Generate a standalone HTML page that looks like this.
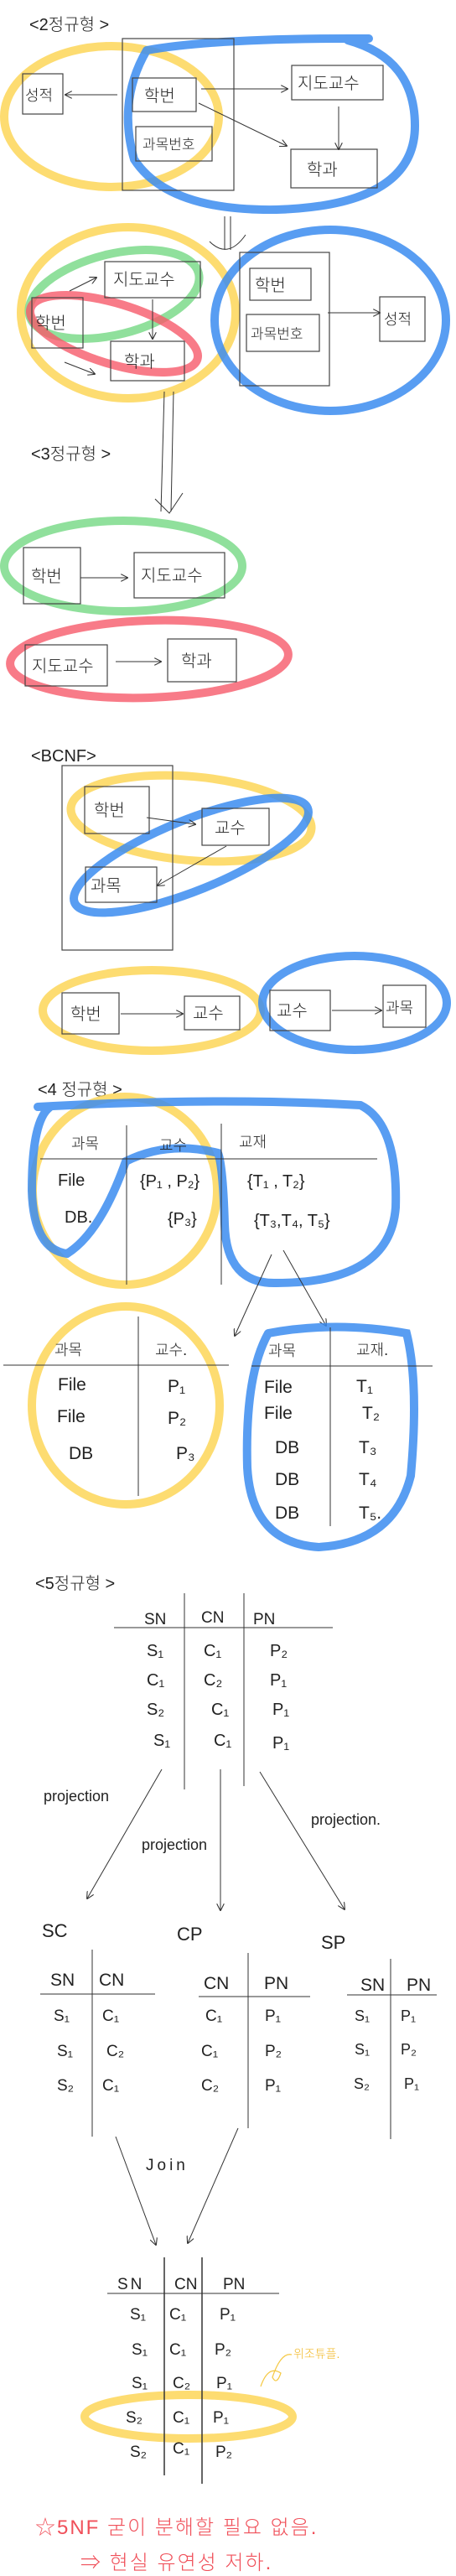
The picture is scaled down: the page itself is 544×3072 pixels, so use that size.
<!DOCTYPE html>
<html><head><meta charset="utf-8"><style>
html,body{margin:0;padding:0;background:#fff;}
svg{display:block}
text{font-family:"Liberation Sans","Noto Sans CJK KR","NanumGothic",sans-serif;fill:#222;font-weight:300}
.b{fill:none;stroke:#444;stroke-width:1.2}
.l{fill:none;stroke:#333;stroke-width:1}
.y{fill:none;stroke:#fcd34d;stroke-width:10;opacity:.8;stroke-linecap:round}
.bl{fill:none;stroke:#3b8cf0;stroke-width:10;opacity:.85;stroke-linecap:round}
.g{fill:none;stroke:#74d883;stroke-width:10;opacity:.8;stroke-linecap:round}
.r{fill:none;stroke:#f65a6a;stroke-width:10;opacity:.8;stroke-linecap:round}
</style></head><body>
<svg width="544" height="3072" viewBox="0 0 544 3072" xmlns="http://www.w3.org/2000/svg">
<defs><marker id="a" viewBox="0 0 10 10" refX="9" refY="5" markerWidth="9" markerHeight="9" orient="auto"><path d="M0 0L10 5L0 10" fill="none" stroke="#333" stroke-width="1.2"/></marker></defs>

<!-- 2NF -->
<text x="35" y="36" font-size="20">&lt;2정규형 &gt;</text>
<ellipse class="y" cx="133" cy="139" rx="128" ry="84"/>
<path class="bl" d="M175 60 Q260 45 440 46 M415 48 Q495 70 495 150 Q495 245 330 250 Q200 252 160 190 Q140 120 175 60"/>
<rect class="b" x="146" y="46" width="133" height="181"/>
<rect class="b" x="158" y="93" width="76" height="40"/><text x="172" y="121" font-size="20">학번</text>
<rect class="b" x="162" y="151" width="91" height="41"/><text x="170" y="178" font-size="17">과목번호</text>
<rect class="b" x="27" y="88" width="48" height="48"/><text x="30" y="120" font-size="18">성적</text>
<line class="l" x1="140" y1="113" x2="78" y2="113" marker-end="url(#a)"/>
<rect class="b" x="348" y="78" width="109" height="41"/><text x="355" y="106" font-size="20">지도교수</text>
<rect class="b" x="347" y="178" width="103" height="46"/><text x="366" y="209" font-size="20">학과</text>
<line class="l" x1="240" y1="106" x2="343" y2="106" marker-end="url(#a)"/>
<line class="l" x1="237" y1="123" x2="342" y2="174" marker-end="url(#a)"/>
<line class="l" x1="404" y1="127" x2="404" y2="178" marker-end="url(#a)"/>
<path class="l" d="M268 258V298 M275 258V298 M250 288Q272 310 293 280"/>

<ellipse class="y" cx="153" cy="373" rx="128" ry="102"/>
<ellipse class="g" cx="136" cy="351" rx="104" ry="48" transform="rotate(-14 136 351)"/>
<ellipse class="r" cx="136" cy="398" rx="104" ry="36" transform="rotate(17 136 398)"/>
<rect class="b" x="125" y="312" width="114" height="43"/><text x="135" y="340" font-size="20">지도교수</text>
<rect class="b" x="38" y="355" width="61" height="60"/><text x="42" y="392" font-size="20">학번</text>
<rect class="b" x="132" y="407" width="88" height="47"/><text x="148" y="438" font-size="20">학과</text>
<line class="l" x1="83" y1="347" x2="115" y2="331" marker-end="url(#a)"/>
<line class="l" x1="182" y1="357" x2="182" y2="404" marker-end="url(#a)"/>
<line class="l" x1="77" y1="432" x2="113" y2="446" marker-end="url(#a)"/>
<ellipse class="bl" cx="394" cy="382" rx="138" ry="108"/>
<rect class="b" x="286" y="301" width="107" height="159"/>
<rect class="b" x="298" y="320" width="73" height="38"/><text x="304" y="347" font-size="20">학번</text>
<rect class="b" x="294" y="375" width="87" height="44"/><text x="299" y="404" font-size="17">과목번호</text>
<rect class="b" x="453" y="354" width="54" height="53"/><text x="458" y="387" font-size="18">성적</text>
<line class="l" x1="391" y1="373" x2="453" y2="373" marker-end="url(#a)"/>

<text x="37" y="548" font-size="20">&lt;3정규형 &gt;</text>
<path class="l" d="M196 467L192 610 M207 467L204 610 M185 595L202 612L218 588"/>

<ellipse class="g" cx="147" cy="675" rx="142" ry="54"/>
<rect class="b" x="28" y="653" width="68" height="67"/><text x="37" y="694" font-size="20">학번</text>
<rect class="b" x="160" y="659" width="108" height="54"/><text x="168" y="693" font-size="20">지도교수</text>
<line class="l" x1="96" y1="689" x2="152" y2="689" marker-end="url(#a)"/>
<ellipse class="r" cx="178" cy="786" rx="166" ry="46" transform="rotate(-2 178 786)"/>
<rect class="b" x="30" y="769" width="98" height="49"/><text x="38" y="801" font-size="20">지도교수</text>
<rect class="b" x="200" y="762" width="82" height="51"/><text x="216" y="795" font-size="20">학과</text>
<line class="l" x1="138" y1="789" x2="192" y2="789" marker-end="url(#a)"/>

<!-- BCNF -->
<text x="37" y="908" font-size="20">&lt;BCNF&gt;</text>
<ellipse class="y" cx="228" cy="976" rx="144" ry="50" transform="rotate(5 228 976)"/>
<ellipse class="bl" cx="228" cy="1020" rx="150" ry="42" transform="rotate(-22 228 1020)"/>
<rect class="b" x="74" y="913" width="132" height="220"/>
<rect class="b" x="101" y="938" width="77" height="56"/><text x="112" y="973" font-size="20">학번</text>
<rect class="b" x="241" y="964" width="80" height="44"/><text x="256" y="994" font-size="20">교수</text>
<rect class="b" x="102" y="1034" width="85" height="42"/><text x="108" y="1063" font-size="20">과목</text>
<line class="l" x1="175" y1="975" x2="233" y2="983" marker-end="url(#a)"/>
<line class="l" x1="270" y1="1009" x2="188" y2="1056" marker-end="url(#a)"/>

<ellipse class="y" cx="181" cy="1205" rx="130" ry="48"/>
<rect class="b" x="74" y="1184" width="68" height="49"/><text x="84" y="1216" font-size="20">학번</text>
<rect class="b" x="220" y="1188" width="66" height="40"/><text x="230" y="1215" font-size="20">교수</text>
<line class="l" x1="144" y1="1209" x2="218" y2="1209" marker-end="url(#a)"/>
<ellipse class="bl" cx="423" cy="1196" rx="110" ry="56"/>
<rect class="b" x="322" y="1181" width="72" height="48"/><text x="330" y="1212" font-size="20">교수</text>
<rect class="b" x="457" y="1175" width="51" height="50"/><text x="460" y="1208" font-size="18">과목</text>
<line class="l" x1="396" y1="1205" x2="455" y2="1205" marker-end="url(#a)"/>

<!-- 4NF -->
<text x="45" y="1306" font-size="20">&lt;4 정규형 &gt;</text>
<ellipse class="y" cx="149" cy="1420" rx="110" ry="112"/>
<path class="bl" d="M45 1320 Q260 1308 430 1318 Q475 1340 472 1440 Q465 1530 330 1530 Q270 1532 268 1460 Q266 1390 260 1375 Q200 1360 150 1385 Q120 1470 80 1495 Q40 1490 38 1420 Q38 1335 60 1320"/>
<line class="l" x1="48" y1="1382" x2="450" y2="1382"/>
<line class="l" x1="151" y1="1342" x2="151" y2="1532"/>
<line class="l" x1="264" y1="1340" x2="264" y2="1532"/>
<text x="85" y="1370" font-size="18">과목</text><text x="190" y="1372" font-size="18">교수</text><text x="285" y="1368" font-size="18">교재</text>
<text x="69" y="1414" font-size="20">File</text><text x="77" y="1458" font-size="20">DB.</text>
<text x="167" y="1415" font-size="20">{P₁ , P₂}</text><text x="200" y="1460" font-size="20">{P₃}</text>
<text x="295" y="1415" font-size="20">{T₁ , T₂}</text><text x="303" y="1462" font-size="20">{T₃,T₄, T₅}</text>
<line class="l" x1="324" y1="1496" x2="280" y2="1593" marker-end="url(#a)"/>
<line class="l" x1="338" y1="1491" x2="389" y2="1581" marker-end="url(#a)"/>

<ellipse class="y" cx="150" cy="1676" rx="112" ry="118"/>
<line class="l" x1="4" y1="1628" x2="273" y2="1628"/>
<line class="l" x1="165" y1="1570" x2="165" y2="1784"/>
<text x="65" y="1616" font-size="18">과목</text><text x="185" y="1616" font-size="18">교수.</text>
<text x="69" y="1658" font-size="21">File</text><text x="68" y="1696" font-size="21">File</text><text x="82" y="1740" font-size="21">DB</text>
<text x="200" y="1660" font-size="21">P₁</text><text x="200" y="1698" font-size="21">P₂</text><text x="210" y="1740" font-size="21">P₃</text>
<path class="bl" d="M320 1590 Q400 1575 485 1590 Q500 1650 490 1760 Q470 1840 380 1845 Q300 1840 295 1750 Q292 1640 320 1590"/>
<line class="l" x1="300" y1="1629" x2="516" y2="1629"/>
<line class="l" x1="394" y1="1583" x2="394" y2="1820"/>
<text x="320" y="1617" font-size="18">과목</text><text x="425" y="1616" font-size="18">교재.</text>
<text x="315" y="1661" font-size="21">File</text><text x="315" y="1692" font-size="21">File</text>
<text x="328" y="1733" font-size="21">DB</text><text x="328" y="1771" font-size="21">DB</text><text x="328" y="1811" font-size="21">DB</text>
<text x="425" y="1660" font-size="21">T₁</text><text x="432" y="1692" font-size="21">T₂</text><text x="428" y="1733" font-size="21">T₃</text><text x="428" y="1771" font-size="21">T₄</text><text x="428" y="1811" font-size="21">T₅.</text>

<!-- 5NF -->
<text x="42" y="1895" font-size="20">&lt;5정규형 &gt;</text>
<line class="l" x1="136" y1="1941" x2="397" y2="1941"/>
<line class="l" x1="220" y1="1900" x2="220" y2="2134"/>
<line class="l" x1="291" y1="1900" x2="291" y2="2130"/>
<text x="172" y="1937" font-size="19">SN</text><text x="240" y="1935" font-size="19">CN</text><text x="302" y="1937" font-size="19">PN</text>
<g font-size="20">
<text x="175" y="1975">S₁</text><text x="243" y="1975">C₁</text><text x="322" y="1975">P₂</text>
<text x="175" y="2010">C₁</text><text x="243" y="2010">C₂</text><text x="322" y="2010">P₁</text>
<text x="175" y="2045">S₂</text><text x="252" y="2045">C₁</text><text x="325" y="2045">P₁</text>
<text x="183" y="2082">S₁</text><text x="255" y="2082">C₁</text><text x="325" y="2085">P₁</text>
</g>
<text x="52" y="2148" font-size="18">projection</text>
<text x="169" y="2206" font-size="18">projection</text>
<text x="371" y="2176" font-size="18">projection.</text>
<line class="l" x1="193" y1="2110" x2="104" y2="2264" marker-end="url(#a)"/>
<line class="l" x1="263" y1="2110" x2="263" y2="2278" marker-end="url(#a)"/>
<line class="l" x1="310" y1="2113" x2="411" y2="2277" marker-end="url(#a)"/>
<text x="50" y="2310" font-size="22">SC</text><text x="211" y="2314" font-size="22">CP</text><text x="383" y="2324" font-size="22">SP</text>

<line class="l" x1="48" y1="2378" x2="185" y2="2378"/><line class="l" x1="110" y1="2325" x2="110" y2="2548"/>
<text x="60" y="2368" font-size="21">SN</text><text x="118" y="2368" font-size="21">CN</text>
<g font-size="19"><text x="64" y="2410">S₁</text><text x="68" y="2452">S₁</text><text x="68" y="2493">S₂</text>
<text x="122" y="2410">C₁</text><text x="127" y="2452">C₂</text><text x="122" y="2493">C₁</text></g>

<line class="l" x1="237" y1="2381" x2="370" y2="2381"/><line class="l" x1="296" y1="2329" x2="296" y2="2538"/>
<text x="243" y="2372" font-size="21">CN</text><text x="315" y="2372" font-size="21">PN</text>
<g font-size="19"><text x="245" y="2410">C₁</text><text x="240" y="2452">C₁</text><text x="240" y="2493">C₂</text>
<text x="316" y="2410">P₁</text><text x="316" y="2452">P₂</text><text x="316" y="2493">P₁</text></g>

<line class="l" x1="414" y1="2379" x2="521" y2="2379"/><line class="l" x1="466" y1="2336" x2="466" y2="2551"/>
<text x="430" y="2374" font-size="21">SN</text><text x="485" y="2374" font-size="21">PN</text>
<g font-size="18"><text x="423" y="2410">S₁</text><text x="423" y="2450">S₁</text><text x="422" y="2491">S₂</text>
<text x="478" y="2410">P₁</text><text x="478" y="2450">P₂</text><text x="482" y="2491">P₁</text></g>

<line class="l" x1="138" y1="2548" x2="186" y2="2677" marker-end="url(#a)"/>
<line class="l" x1="284" y1="2538" x2="224" y2="2675" marker-end="url(#a)"/>
<text x="174" y="2588" font-size="19" letter-spacing="4">Join</text>

<ellipse class="y" cx="225" cy="2882" rx="124" ry="26"/>
<line class="l" x1="128" y1="2735" x2="333" y2="2735"/>
<line class="l" x1="196" y1="2692" x2="196" y2="2952" style="stroke-width:1.5"/>
<line class="l" x1="241" y1="2692" x2="241" y2="2962" style="stroke-width:1.5"/>
<text x="140" y="2730" font-size="19" letter-spacing="3">SN</text><text x="208" y="2730" font-size="19">CN</text><text x="266" y="2730" font-size="19">PN</text>
<g font-size="19">
<text x="155" y="2766">S₁</text><text x="202" y="2766">C₁</text><text x="262" y="2766">P₁</text>
<text x="157" y="2808">S₁</text><text x="202" y="2808">C₁</text><text x="256" y="2808">P₂</text>
<text x="157" y="2848">S₁</text><text x="206" y="2848">C₂</text><text x="258" y="2848">P₁</text>
<text x="150" y="2889">S₂</text><text x="206" y="2889">C₁</text><text x="254" y="2889">P₁</text>
<text x="155" y="2930">S₂</text><text x="206" y="2926">C₁</text><text x="257" y="2930">P₂</text>
</g>
<path d="M311 2846 Q320 2820 335 2830 Q330 2845 325 2835 Q335 2805 348 2808" fill="none" stroke="#f5c842" stroke-width="1.2"/>
<text x="350" y="2812" font-size="14" style="fill:#f2b928">위조튜플.</text>
<text x="42" y="3022" font-size="24" style="fill:#f0505a" letter-spacing="2">☆5NF 굳이 분해할 필요 없음.</text>
<text x="96" y="3064" font-size="24" style="fill:#f0505a" letter-spacing="2">⇒ 현실 유연성 저하.</text>
</svg>
</body></html>
